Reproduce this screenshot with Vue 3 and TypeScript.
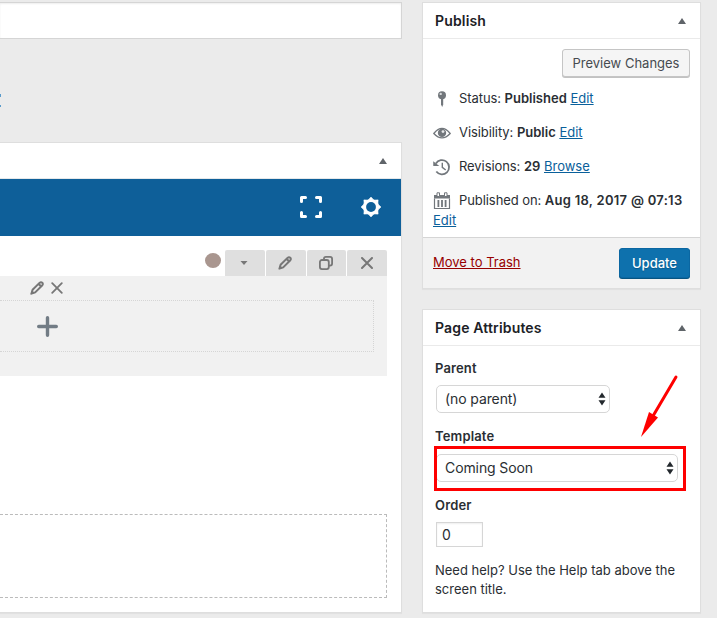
<script setup lang="ts">
import { ref } from 'vue'

interface StatusRow {
  icon: 'pin' | 'eye' | 'history' | 'calendar'
  label: string
  value: string
  action: string
}

const rows: StatusRow[] = [
  { icon: 'pin', label: 'Status:', value: 'Published', action: 'Edit' },
  { icon: 'eye', label: 'Visibility:', value: 'Public', action: 'Edit' },
  { icon: 'history', label: 'Revisions:', value: '29', action: 'Browse' },
  { icon: 'calendar', label: 'Published on:', value: 'Aug 18, 2017 @ 07:13', action: 'Edit' },
]

const order = ref('0')
</script>

<template>
  <div class="page">
    <main class="editor">
      <div class="title-field"></div>
      <div class="slug">
        <svg width="1" height="14" viewBox="0 0 1 14"><path d="M0 0h1v3H0zM0 11h1v2H0z" fill="#5a9bcb" /></svg>
      </div>
      <section class="builder">
        <header class="builder-head"><span class="toggle"></span></header>
        <div class="toolbar">
          <svg class="expand" width="22" height="22" viewBox="0 0 22 22" fill="none" stroke="#fff" stroke-width="3" stroke-linecap="round" stroke-linejoin="round">
            <path d="M1.500 5.400V1.500H5.500M16.500 1.500H20.500V5.400M1.500 16.600V20.500H5.500M16.500 20.500H20.500V16.600" />
          </svg>
          <svg class="gear" width="20" height="20" viewBox="0 0 20 20">
            <g fill="#fff">
              <circle cx="10" cy="10" r="8.100" />
              <path d="M10 0L12.400 2.500H7.600zM10 20L12.400 17.500H7.600zM0 10L2.500 7.600V12.400zM20 10L17.500 7.600V12.400z" stroke="#fff" stroke-width=".5" />
              <path d="M2.900 2.900L6.300 3.100L3.100 6.300zM17.100 2.900L16.900 6.300L13.700 3.100zM2.900 17.100L3.100 13.700L6.300 16.900zM17.100 17.100L13.700 16.900L16.900 13.700z" stroke="#fff" stroke-width=".6" />
            </g>
            <circle cx="10" cy="10" r="4.900" fill="#0e5f99" />
          </svg>
        </div>
        <div class="row-controls">
          <span class="dot"></span>
          <span class="tab"><svg width="8" height="4" viewBox="0 0 8 4"><path d="M.5 0h7L4 3.900z" fill="#777" /></svg></span>
          <span class="tab">
            <svg width="14" height="14" viewBox="0 0 14 14" fill="none" stroke="#777" stroke-width="2" stroke-linejoin="round"><path d="M1.500 12.500L2.600 8.800L9.500 1.900Q11 .6 12.300 1.800Q13.400 3 12.100 4.500L5.200 11.400zM8.500 2.800L11.200 5.500" /><path d="M.5 13.500L2 9.300L4.700 12z" fill="#777" stroke="none" /></svg>
          </span>
          <span class="tab">
            <svg width="14" height="14" viewBox="0 0 14 14" fill="none" stroke="#777" stroke-width="1.800"><rect x=".9" y="4" width="8.900" height="9.100" rx="2" /><path d="M4.900 3.800V2.900Q4.900 .9 6.900 .9H11.100Q13.100 .9 13.100 2.900V7.600Q13.100 9.600 11.100 9.600H10" /></svg>
          </span>
          <span class="tab">
            <svg width="12" height="12" viewBox="0 0 12 12" stroke="#777" stroke-width="2" stroke-linecap="round"><path d="M1 1L11 11M11 1L1 11" /></svg>
          </span>
        </div>
        <div class="canvas-row">
          <div class="column-controls">
            <svg width="14" height="14" viewBox="0 0 14 14" fill="none" stroke="#777" stroke-width="2" stroke-linejoin="round"><path d="M1.500 12.500L2.600 8.800L9.500 1.900Q11 .6 12.300 1.800Q13.400 3 12.100 4.500L5.200 11.400zM8.500 2.800L11.200 5.500" /><path d="M.3 13.700L2 9.300L4.700 12z" fill="#777" stroke="none" /></svg>
            <svg width="12" height="12" viewBox="0 0 12 12" stroke="#777" stroke-width="1.800" stroke-linecap="round"><path d="M1.200 1.200L10.800 10.800M10.800 1.200L1.200 10.800" /></svg>
          </div>
          <div class="column">
            <svg width="21" height="21" viewBox="0 0 21 21" stroke="#727c85" stroke-width="3.400" stroke-linecap="round"><path d="M10.500 1.700V19.300M1.700 10.500H19.300" /></svg>
          </div>
        </div>
        <div class="dropzone"></div>
      </section>
    </main>

    <aside class="sidebar">
      <section class="box publish">
        <header class="box-head"><h2>Publish</h2><span class="toggle"></span></header>
        <div class="preview-line"><button class="preview">Preview Changes</button></div>
        <div class="status-list">
          <div v-for="row in rows" :key="row.label" class="status" :class="row.icon">
            <svg v-if="row.icon === 'pin'" class="icon" viewBox="0 0 18 18"><circle cx="9" cy="5.200" r="4" fill="#72777c" /><path d="M8 8h2.200v6.500L9.200 17 8 14.500z" fill="#72777c" /><circle cx="7.700" cy="3.900" r="1.200" fill="#d5d8da" /></svg>
            <svg v-else-if="row.icon === 'eye'" class="icon" viewBox="0 0 18 18"><path d="M.8 9.500Q9-.8 17.200 9.500Q9 18.300 .8 9.500z" fill="none" stroke="#72777c" stroke-width="1.300" /><circle cx="9" cy="8.900" r="4.200" fill="#72777c" /><circle cx="10" cy="7.600" r="1.400" fill="#e8e9ea" /></svg>
            <svg v-else-if="row.icon === 'history'" class="icon" viewBox="0 0 18 18"><path d="M2.900 5.500A7.100 7.100 0 1 1 3.300 13.500" fill="none" stroke="#72777c" stroke-width="1.800" /><path d="M.2 3.200L6.300 8H.3z" fill="#72777c" /><path d="M9.300 4.800V9.300L12.700 12" fill="none" stroke="#72777c" stroke-width="1.400" /></svg>
            <svg v-else class="icon" viewBox="0 0 18 18"><path d="M1.500 6.500V16.500H16.500V6.500" fill="none" stroke="#72777c" stroke-width="1.200" /><path d="M1 3h16v3.500H1zM4.500 8h1.800v7H4.500zM8.100 8h1.800v7H8.100zM11.700 8h1.800v7h-1.800z" fill="#72777c" /><path d="M4 .8h2.500v3.700H4zM11.500 .8H14v3.700h-2.500z" fill="#fff" stroke="#72777c" stroke-width="1" /></svg>
            <span class="label">{{ row.label }}</span>&#32;<b>{{ row.value }}</b>&#32;<a>{{ row.action }}</a>
          </div>
        </div>
        <footer class="publish-foot"><a class="trash">Move to Trash</a><button class="update">Update</button></footer>
      </section>

      <section class="box attributes">
        <header class="box-head"><h2>Page Attributes</h2><span class="toggle"></span></header>
        <div class="fields">
          <label class="name">Parent</label>
          <div class="select parent"><span>(no parent)</span><svg width="8" height="14" viewBox="0 0 8 14"><path d="M4 .5L7.500 5.800H.5zM4 13.500L7.500 8.200H.5z" fill="#23282d" /></svg></div>
          <label class="name">Template</label>
          <div class="select template"><span>Coming Soon</span><svg width="8" height="14" viewBox="0 0 8 14"><path d="M4 .5L7.500 5.800H.5zM4 13.500L7.500 8.200H.5z" fill="#23282d" /></svg></div>
          <label class="name">Order</label>
          <input v-model="order" class="order" type="text" />
          <p class="help">Need help? Use the Help tab above the<br />screen title.</p>
        </div>
        <div class="highlight"></div>
        <svg class="arrow" width="42" height="66" viewBox="0 0 42 66"><path d="M37 5L14 44" stroke="#fe0000" stroke-width="3" stroke-linecap="round" /><path d="M2 65L10 40L19 45.500z" fill="#fe0000" /></svg>
      </section>
    </aside>
  </div>
</template>

<style>
body {
  background: #ebebeb;
  overflow: hidden;
}
</style>

<style scoped>
* {
  box-sizing: border-box;
}
svg {
  display: block;
  flex: none;
}
.page {
  display: flex;
  gap: 20px;
  width: 717px;
  height: 618px;
  padding-top: 2px;
  background: #ebebeb;
  color: #2a2e33;
  font-family: Inter, "Liberation Sans", sans-serif;
  font-size: 13px;
  line-height: 20px;
}
.editor {
  width: 402px;
}
.title-field {
  height: 37px;
  background: #fff;
  border: 1px solid #d5d5d5;
  border-left: 0;
  box-shadow: inset 0 1px 2px rgba(0, 0, 0, 0.07);
}
.slug {
  height: 103px;
  padding-top: 55px;
}
.builder {
  height: 471px;
  background: #fff;
  border: 1px solid #dedede;
  border-left: 0;
  box-shadow: 0 1px 1px rgba(0, 0, 0, 0.04);
}
.builder-head {
  display: flex;
  align-items: center;
  justify-content: flex-end;
  height: 36px;
  padding-right: 14px;
  border-bottom: 1px solid #e5e8ea;
}
.toggle {
  border: 4px solid transparent;
  border-top: 0;
  border-bottom: 6px solid #5f6469;
}
.toolbar {
  display: flex;
  align-items: center;
  justify-content: flex-end;
  gap: 39px;
  height: 57px;
  padding: 0 20px 1px 0;
  background: #0e5f99;
}
.row-controls {
  display: flex;
  gap: 1px;
  height: 40px;
  padding: 14px 14px 0 0;
  justify-content: flex-end;
}
.dot {
  width: 16px;
  height: 15px;
  margin: 3px 3px 0 0;
  border-radius: 50%;
  background: #a9968f;
}
.tab {
  display: flex;
  align-items: center;
  justify-content: center;
  width: 39.75px;
  padding-right: 1px;
  background: #dfdfdf;
  border-radius: 2px 2px 0 0;
}
.canvas-row {
  height: 100px;
  width: 387px;
  background: #f1f1f1;
}
.column-controls {
  display: flex;
  align-items: center;
  gap: 7px;
  height: 24px;
  padding-left: 30px;
}
.column {
  width: 374px;
  height: 52px;
  padding: 15px 0 0 37px;
  border: 1px dotted #d5d5d5;
  border-left: 0;
}
.dropzone {
  width: 387px;
  height: 84px;
  margin-top: 138px;
  border: 1px dashed #bbb;
  border-left: 0;
}
.sidebar {
  width: 279px;
}
.box {
  position: relative;
  background: #fff;
  border: 1px solid #dedede;
  box-shadow: 0 1px 1px rgba(0, 0, 0, 0.04);
}
.publish {
  height: 287px;
  margin-bottom: 20px;
}
.attributes {
  height: 304px;
}
.box-head {
  display: flex;
  align-items: center;
  justify-content: space-between;
  height: 36px;
  padding: 0 14px 0 12px;
  border-bottom: 1px solid #eaeaea;
}
h2 {
  margin: 0;
  font-size: 14px;
  font-weight: 600;
  letter-spacing: 0.16px;
  color: #1c2126;
}
.preview-line {
  display: flex;
  justify-content: flex-end;
  padding: 10px 10px 0 0;
}
button {
  padding: 0;
  border-radius: 3px;
  font: inherit;
}
.preview {
  width: 128px;
  height: 28px;
  border: 1px solid #c5c5c5;
  background: #f5f5f5;
  box-shadow: 0 1px 0 #c2c2c2;
  color: #464b50;
}
.status-list {
  height: 160px;
  padding-top: 4px;
}
.status {
  position: relative;
  padding: 7px 10px;
  white-space: nowrap;
}
.status.calendar {
  white-space: normal;
}
.icon {
  display: inline-block;
  width: 18px;
  height: 18px;
  margin-right: 8px;
  vertical-align: -5px;
}
.label {
  letter-spacing: -0.08px;
}
b {
  font-weight: 600;
}
.calendar b {
  letter-spacing: 0.28px;
}
a {
  color: #0a609b;
  text-decoration: underline;
}
.publish-foot {
  display: flex;
  align-items: center;
  justify-content: space-between;
  height: 51px;
  padding: 0 10px;
  background: #f2f2f2;
  border-top: 1px solid #d5d5d5;
}
.trash {
  padding-bottom: 2px;
  color: #970000;
}
.update {
  width: 71px;
  height: 30px;
  border: 1px solid #0b67a2;
  background: #0e71ad;
  box-shadow: 0 1px 0 #075582;
  color: #fff;
  font-weight: 500;
  text-shadow: 0 1px 1px #06588a;
}
.fields {
  display: flex;
  flex-direction: column;
  align-items: flex-start;
  padding: 12px 12px;
}
.name {
  font-weight: 600;
  letter-spacing: 0.14px;
}
.select {
  display: flex;
  align-items: center;
  justify-content: space-between;
  height: 28px;
  margin-left: 1px;
  padding: 0 3px 0 8px;
  border: 1px solid #d6d6d6;
  border-radius: 5px;
  font-size: 14px;
  letter-spacing: -0.1px;
}
.parent {
  width: 174px;
  margin-top: 7px;
  margin-bottom: 13px;
}
.template {
  width: 242px;
  margin-top: 8px;
  margin-bottom: 13px;
}
.order {
  width: 47px;
  height: 25px;
  margin: 7px 0 0 1px;
  padding: 0 5px;
  border: 1px solid #d6d6d6;
  box-shadow: inset 0 1px 2px rgba(0, 0, 0, 0.07);
  font: 14px Inter, sans-serif;
  color: #2a2e33;
}
.help {
  margin: 14px 0 0;
  line-height: 19px;
  white-space: nowrap;
}
.highlight {
  position: absolute;
  top: 136px;
  left: 11px;
  width: 252px;
  height: 45px;
  border: 3px solid #fe0000;
}
.arrow {
  position: absolute;
  top: 62px;
  left: 216px;
}
</style>
